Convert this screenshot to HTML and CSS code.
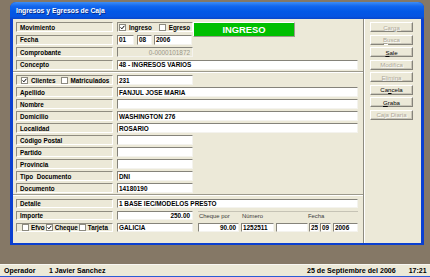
FILE: index.html
```html
<!DOCTYPE html>
<html lang="es">
<head>
<meta charset="utf-8">
<title>Ingresos y Egresos de Caja</title>
<link rel="stylesheet" href="styles.css">
</head>
<body>
<div class="desk">
  <div class="win">
    <div class="title">Ingresos y Egresos de Caja</div>
    <div class="client">
      <div class="form">
        <div class="grp g1">
          <div class="row">
            <div class="lbl">Movimiento</div>
            <div class="chk w75">
              <svg class="cb" width="7" height="7" viewBox="0 0 7 7"><rect x="0.5" y="0.5" width="6" height="6" fill="#fff" stroke="#8c8a80"/><path d="M1.6 3.4 L2.9 4.8 L5.4 1.8" fill="none" stroke="#000" stroke-width="1"/></svg><span class="ct">Ingreso</span>
              <svg class="cb gapl" width="7" height="7" viewBox="0 0 7 7"><rect x="0.5" y="0.5" width="6" height="6" fill="#fff" stroke="#8c8a80"/></svg><span class="ct">Egreso</span>
            </div>
            <div class="badge">INGRESO</div>
          </div>
          <div class="row">
            <div class="lbl">Fecha</div>
            <div class="in f1">01</div>
            <div class="in f2">08</div>
            <div class="in f3">2006</div>
          </div>
          <div class="row">
            <div class="lbl">Comprobante</div>
            <div class="in w75 dis">0-0000101872</div>
          </div>
          <div class="row">
            <div class="lbl">Concepto</div>
            <div class="in wl">48 - INGRESOS VARIOS</div>
          </div>
        </div>

        <div class="grp g2">
          <div class="row">
            <div class="lbl chkl">
              <svg class="cb" width="7" height="7" viewBox="0 0 7 7"><rect x="0.5" y="0.5" width="6" height="6" fill="#fff" stroke="#8c8a80"/><path d="M1.6 3.4 L2.9 4.8 L5.4 1.8" fill="none" stroke="#000" stroke-width="1"/></svg><span class="ct">Clientes</span>
              <svg class="cb gapm" width="7" height="7" viewBox="0 0 7 7"><rect x="0.5" y="0.5" width="6" height="6" fill="#fff" stroke="#8c8a80"/></svg><span class="ct">Matriculados</span>
            </div>
            <div class="in w75">231</div>
          </div>
          <div class="row"><div class="lbl">Apellido</div><div class="in wl">FANJUL JOSE MARIA</div></div>
          <div class="row"><div class="lbl">Nombre</div><div class="in wl"></div></div>
          <div class="row"><div class="lbl">Domicilio</div><div class="in wl">WASHINGTON 276</div></div>
          <div class="row"><div class="lbl">Localidad</div><div class="in wl">ROSARIO</div></div>
          <div class="row"><div class="lbl">Código Postal</div><div class="in w75"></div></div>
          <div class="row"><div class="lbl">Partido</div><div class="in w75"></div></div>
          <div class="row"><div class="lbl">Provincia</div><div class="in w75"></div></div>
          <div class="row"><div class="lbl">Tipo&nbsp; Documento</div><div class="in w75">DNI</div></div>
          <div class="row"><div class="lbl">Documento</div><div class="in w75">14180190</div></div>
        </div>

        <div class="grp g3">
          <div class="row r9">
            <div class="lbl">Detalle</div>
            <div class="in wl">1 BASE IEC/MODELOS PRESTO</div>
          </div>
          <div class="row r9">
            <div class="lbl">Importe</div>
            <div class="in w75 num">250.00</div>
            <div class="chqhead">
              <span class="ch1">Cheque por</span><span class="ch2">Número</span><span class="ch3">Fecha</span>
            </div>
          </div>
          <div class="row r9">
            <div class="lbl chkl pay">
              <svg class="cb" width="7" height="7" viewBox="0 0 7 7"><rect x="0.5" y="0.5" width="6" height="6" fill="#fff" stroke="#8c8a80"/></svg><span class="ct">Efvo</span>
              <svg class="cb p2" width="7" height="7" viewBox="0 0 7 7"><rect x="0.5" y="0.5" width="6" height="6" fill="#fff" stroke="#8c8a80"/><path d="M1.6 3.4 L2.9 4.8 L5.4 1.8" fill="none" stroke="#000" stroke-width="1"/></svg><span class="ct">Cheque</span>
              <svg class="cb p3" width="7" height="7" viewBox="0 0 7 7"><rect x="0.5" y="0.5" width="6" height="6" fill="#fff" stroke="#8c8a80"/></svg><span class="ct">Tarjeta</span>
            </div>
            <div class="in w75">GALICIA</div>
            <div class="in c1 num">90.00</div>
            <div class="in c2">1252511</div>
            <div class="in c3"></div>
            <div class="in c4">25</div>
            <div class="in c5">09</div>
            <div class="in c6">2006</div>
          </div>
        </div>
      </div>

      <div class="side">
        <div class="btn off">Carga</div>
        <div class="btn off"><u>B</u>usca</div>
        <div class="btn"><u>S</u>ale</div>
        <div class="btn off">Modifica</div>
        <div class="btn off">Elimina</div>
        <div class="btn">Ca<u>n</u>cela</div>
        <div class="btn"><u>G</u>raba</div>
        <div class="btn off">Caja Diaria</div>
      </div>
    </div>
  </div>
</div>
<div class="status">
  <span class="op">Operador</span>
  <span class="user">1 Javier Sanchez</span>
  <span class="date">25 de Septiembre del 2006</span>
  <span class="time">17:21</span>
</div>
</body>
</html>
```
FILE: styles.css
```css
* { box-sizing: border-box; }
html, body { margin: 0; padding: 0; }
body {
  width: 430px;
  height: 277px;
  overflow: hidden;
  background: #857866;
  font-family: "Liberation Sans", Arial, sans-serif;
  color: #000;
}
.desk {
  height: 264px;
  padding: 2px 0 0 10px;
}
.win {
  width: 414px;
  height: 243px;
  background: #0a3fd0;
  border-radius: 6px 6px 0 0;
  display: flex;
  flex-direction: column;
}
.title {
  height: 17px;
  flex: none;
  padding-left: 6px;
  display: flex;
  align-items: center;
  color: #fff;
  font-weight: bold;
  font-size: 6.8px;
  border-radius: 6px 6px 0 0;
  background: linear-gradient(#3d8df5 0, #1266ee 25%, #0358e6 55%, #0554e2 85%, #0a46c8 100%);
  text-shadow: 1px 1px 0 #0a2c8a;
}
.client {
  flex: 1;
  margin: 0 3px 2px;
  background: #ece9d8;
  display: flex;
}
.form {
  width: 351px;
  border-right: 1px solid #8d8b80;
  display: flex;
  flex-direction: column;
}
.grp {
  display: flex;
  flex-direction: column;
  padding-left: 3px;
}
.g1 {
  padding-top: 3px;
  padding-bottom: 1.5px;
  gap: 2.5px;
  border-bottom: 1px solid #9d9a8c;
}
.g2 {
  padding-top: 2px;
  padding-bottom: 1px;
  gap: 2px;
  border-top: 1px solid #fff;
  border-bottom: 1px solid #9d9a8c;
}
.g3 {
  padding-top: 3px;
  gap: 3px;
  border-top: 1px solid #fff;
  flex: 1;
}
.row {
  height: 10px;
  display: flex;
  align-items: stretch;
}
.row.r9 { height: 9px; }
.lbl {
  width: 97px;
  margin-right: 4px;
  padding-left: 3px;
  display: flex;
  align-items: center;
  font-weight: bold;
  font-size: 6.3px;
  white-space: nowrap;
  border-style: solid;
  border-width: 1px;
  border-color: #8f8c80 #fff #fff #8f8c80;
}
.in {
  background: #fff;
  padding: 0 2px 0 1px;
  display: flex;
  align-items: center;
  font-weight: bold;
  font-size: 6.4px;
  white-space: nowrap;
  border-style: solid;
  border-width: 1px;
  border-color: #85837a #f4f3ee #f4f3ee #85837a;
  overflow: hidden;
}
.in.num { justify-content: flex-end; }
.in.dis {
  background: #ece9d8;
  color: #9a978b;
  font-weight: normal;
  justify-content: flex-end;
}
.w75 { width: 76px; flex: none; }
.wl { width: 241px; flex: none; }
.f1 { width: 17px; margin-right: 3px; }
.f2 { width: 15px; margin-right: 2px; }
.f3 { width: 38px; }
.chk {
  display: flex;
  align-items: center;
  padding-left: 1px;
  font-weight: bold;
  font-size: 6.3px;
  border-style: solid;
  border-width: 1px;
  border-color: #8f8c80 #fff #fff #8f8c80;
}
.cb { flex: none; display: block; }
.ct { margin-left: 3px; }
.gapl { margin-left: 7px; }
.lbl.chkl { padding-left: 4px; }
.gapm { margin-left: 5px; }
.pay .cb { margin-left: 1px; }
.pay .ct { margin-left: 2px; }
.pay .p2 { margin-left: 1px; }
.pay .p3 { margin-left: 1px; }
.badge {
  width: 102px;
  height: 15px;
  flex: none;
  background: #00bf00;
  color: #fff;
  font-weight: bold;
  font-size: 9.4px;
  display: flex;
  align-items: center;
  justify-content: center;
  border-style: solid;
  border-width: 1px;
  border-color: #ffffff #9d9a8c #9d9a8c #ffffff;
  position: relative;
  z-index: 1;
}
.chqhead {
  width: 160px;
  margin-left: 5px;
  border-top: 1px solid #c6c3b5;
  display: flex;
  align-items: center;
  font-size: 5.9px;
  color: #3a3a3a;
  white-space: nowrap;
}
.ch1 { width: 44px; padding-left: 1px; }
.ch2 { width: 66px; }
.c1 { width: 41px; margin-left: 5px; }
.c2 { width: 33px; margin-left: 2px; }
.c3 { width: 32px; margin-left: 2px; }
.c4 { width: 10px; margin-left: 1px; }
.c5 { width: 11px; margin-left: 1px; }
.c6 { width: 25px; margin-left: 2px; }
.side {
  flex: 1;
  border-left: 1px solid #fff;
  padding: 3px 0 0 5px;
  display: flex;
  flex-direction: column;
  gap: 2.5px;
}
.btn {
  width: 43px;
  height: 10px;
  display: flex;
  align-items: center;
  justify-content: center;
  font-size: 6.1px;
  background: #ece9d8;
  border-style: solid;
  border-width: 1px;
  border-color: #fff #85837a #85837a #fff;
  box-shadow: inset -1px -1px 0 #c9c6b8;
  white-space: nowrap;
}
.btn.off {
  color: #aca899;
  text-shadow: 1px 1px 0 #fff;
}
.btn u { text-decoration: underline; }
.status {
  height: 13px;
  background: #ece9d8;
  border-top: 1px solid #f8f7f2;
  border-bottom: 1px solid #2b5bd6;
  display: flex;
  align-items: center;
  font-weight: bold;
  font-size: 7px;
  white-space: nowrap;
  padding-left: 4px;
}
.op { width: 45px; }
.user { width: 258px; }
.date { font-size: 7.1px; }
.time { margin-left: 13px; }
```
